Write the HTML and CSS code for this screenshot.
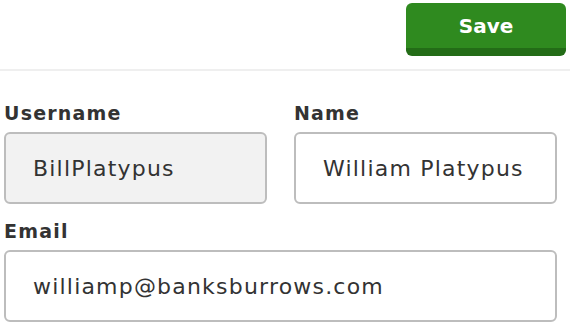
FILE: index.html
```html
<!DOCTYPE html>
<html>
<head>
<meta charset="utf-8">
<link rel="stylesheet" href="styles.css">
</head>
<body>
<header class="toolbar">
  <button class="save-btn" type="button">Save</button>
</header>
<form class="profile-form">
  <div class="field">
    <label class="field-label">Username</label>
    <div class="field-input is-readonly">BillPlatypus</div>
  </div>
  <div class="field">
    <label class="field-label">Name</label>
    <div class="field-input">William Platypus</div>
  </div>
  <div class="field field-wide">
    <label class="field-label">Email</label>
    <div class="field-input">williamp@banksburrows.com</div>
  </div>
</form>
</body>
</html>
```

FILE: styles.css
```css
* { box-sizing: border-box; }
html, body {
  margin: 0;
  padding: 0;
  background: #ffffff;
  font-family: "DejaVu Sans", "Open Sans", sans-serif;
  color: #333333;
}
.toolbar {
  display: flex;
  justify-content: flex-end;
  padding: 3px 4px 13px;
  border-bottom: 2px solid #efefef;
}
.save-btn {
  width: 160px;
  height: 53px;
  border: none;
  border-bottom: 8px solid #236c17;
  border-radius: 6px;
  background: #2f8a1f;
  color: #ffffff;
  font-family: inherit;
  font-weight: bold;
  font-size: 20px;
  padding: 0;
}
.profile-form {
  display: grid;
  grid-template-columns: 1fr 1fr;
  column-gap: 27px;
  row-gap: 15px;
  padding: 30px 13px 0 4px;
}
.field {
  display: flex;
  flex-direction: column;
  gap: 7px;
}
.field-wide { grid-column: 1 / -1; }
.field-label {
  font-weight: bold;
  font-size: 19px;
  letter-spacing: 1.2px;
  line-height: 24px;
  color: #333333;
}
.field-input {
  height: 72px;
  border: 2px solid #bdbdbd;
  border-radius: 6px;
  padding: 0 0 0 27px;
  display: flex;
  align-items: center;
  font-size: 22px;
  letter-spacing: 1.2px;
  color: #333333;
  background: #ffffff;
}
.field-input.is-readonly { background: #f2f2f2; }
```
